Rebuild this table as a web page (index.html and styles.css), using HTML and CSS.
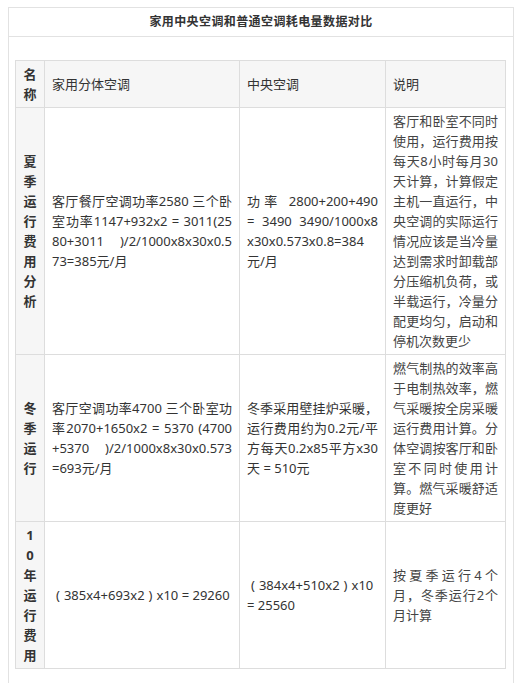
FILE: index.html
```html
<!DOCTYPE html>
<html lang="zh-CN">
<head>
<meta charset="utf-8">
<link rel="stylesheet" href="styles.css">
</head>
<body>
<div class="sheet">
  <div class="sheet-title">家用中央空调和普通空调耗电量数据对比</div>
  <div class="sheet-body">
    <table class="cmp">
      <colgroup>
        <col class="c1"><col class="c2"><col class="c3"><col class="c4">
      </colgroup>
      <thead>
        <tr>
          <th class="name">名称</th>
          <th>家用分体空调</th>
          <th>中央空调</th>
          <th>说明</th>
        </tr>
      </thead>
      <tbody>
        <tr>
          <td class="name">夏季运行费用分析</td>
          <td>客厅餐厅空调功率2580 三个卧室功率1147+932x2 = 3011(2580+3011 &ensp;)/2/1000x8x30x0.573=385元/月</td>
          <td><span class="jl">功率 2800+200+490</span><span class="jl">= 3490 3490/1000x8</span>x30x0.573x0.8=384<br>元/月</td>
          <td class="note">客厅和卧室不同时使用，运行费用按每天8小时每月30天计算，计算假定主机一直运行，中央空调的实际运行情况应该是当冷量达到需求时卸载部分压缩机负荷，或半载运行，冷量分配更均匀，启动和停机次数更少</td>
        </tr>
        <tr>
          <td class="name">冬季运行</td>
          <td>客厅空调功率4700 三个卧室功率2070+1650x2 = 5370 (4700+5370 &ensp;)/2/1000x8x30x0.573=693元/月</td>
          <td>冬季采用壁挂炉采暖，运行费用约为0.2元/平方每天0.2x85平方x30天 = 510元</td>
          <td class="note">燃气制热的效率高于电制热效率，燃气采暖按全房采暖运行费用计算。分体空调按客厅和卧室不同时使用计算。燃气采暖舒适度更好</td>
        </tr>
        <tr>
          <td class="name">10年运行费用</td>
          <td><span class="fp">(</span>385x4+693x2<span class="fp">)</span>x10 = 29260</td>
          <td><span class="jl"><span class="fp">(</span>384x4+510x2<span class="fp">)</span>x10</span>= 25560</td>
          <td class="note">按夏季运行4个月，冬季运行2个月计算</td>
        </tr>
      </tbody>
    </table>
  </div>
</div>
</body>
</html>
```
FILE: styles.css
```css
html, body {
  background: #ffffff;
}
body {
  margin: 7px 0 0 8px;
  font-family: "Noto Sans", "Noto Sans CJK SC", sans-serif;
  color: #333333;
}
.sheet {
  box-sizing: border-box;
  width: 506px;
  min-height: 700px;
  border: 1px solid #e2e2e2;
  border-bottom: none;
}
.sheet-title {
  height: 28px;
  line-height: 28px;
  border-bottom: 1px solid #e2e2e2;
  text-align: center;
  font-size: 12px;
  font-weight: bold;
  letter-spacing: 0.4px;
  color: #333333;
}
.sheet-body {
  padding: 23px 7px 20px 6px;
}
.cmp {
  width: 490px;
  border-collapse: collapse;
  table-layout: fixed;
  font-size: 13px;
  line-height: 20px;
}
.c1 { width: 29px; }
.c2 { width: 195px; }
.c3 { width: 146px; }
.c4 { width: 120px; }
.cmp th,
.cmp td {
  border: 1px solid #dddddd;
  padding: 3px 7px;
  vertical-align: middle;
  text-align: justify;
  word-break: break-all;
  font-weight: normal;
  color: #333333;
}
.cmp thead th {
  background: #f6f6f6;
  text-align: left;
}
.cmp .name {
  background: #f6f6f6;
  text-align: center;
  font-weight: bold;
  padding: 3px 7px;
}
.cmp .note {
  color: #444444;
}
.fp {
  padding: 0 4px;
}
.jl {
  display: block;
  text-align: justify;
  text-align-last: justify;
}
```
